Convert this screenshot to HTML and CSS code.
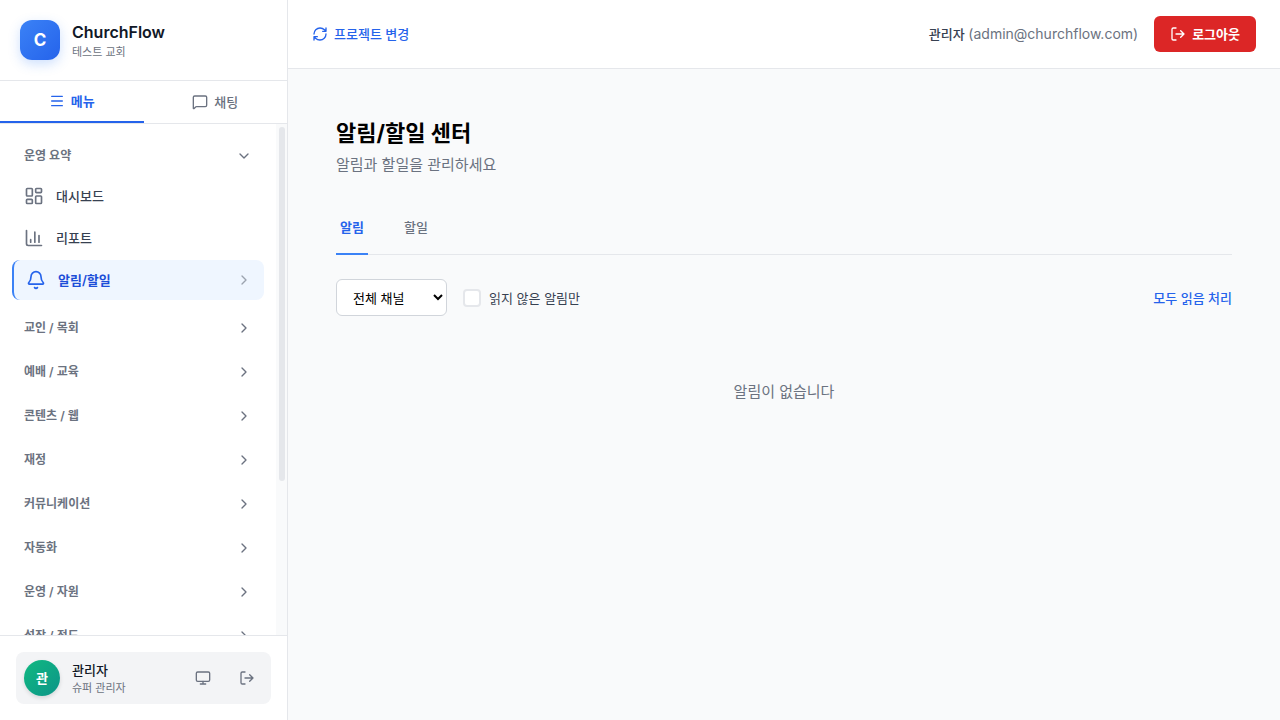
FILE: index.html
```html
<!DOCTYPE html>
<html lang="ko">
<head>
<meta charset="utf-8">
<meta name="viewport" content="width=device-width, initial-scale=1">
<title>ChurchFlow</title>
<link rel="stylesheet" href="styles.css">
</head>
<body>
<svg class="sprite" aria-hidden="true">
  <symbol id="right" viewBox="0 0 24 24"><path d="m9 18 6-6-6-6"/></symbol>
  <symbol id="down" viewBox="0 0 24 24"><path d="m6 9 6 6 6-6"/></symbol>
  <symbol id="menu" viewBox="0 0 24 24"><path d="M4 5h16M4 12h16M4 19h16"/></symbol>
  <symbol id="chat" viewBox="0 0 24 24"><path d="M22 17a2 2 0 0 1-2 2H6.800a2 2 0 0 0-1.400.600l-2.200 2.200A.7.7 0 0 1 2 21.300V5a2 2 0 0 1 2-2h16a2 2 0 0 1 2 2z"/></symbol>
  <symbol id="grid" viewBox="0 0 24 24"><rect x="3" y="3" width="7" height="9" rx="1"/><rect x="14" y="3" width="7" height="5" rx="1"/><rect x="14" y="12" width="7" height="9" rx="1"/><rect x="3" y="16" width="7" height="5" rx="1"/></symbol>
  <symbol id="chart" viewBox="0 0 24 24"><path d="M3 3v16a2 2 0 0 0 2 2h16M18 17V9M13 17V5M8 17v-3"/></symbol>
  <symbol id="bell" viewBox="0 0 24 24"><path d="M10.268 21a2 2 0 0 0 3.464 0M3.262 15.326A1 1 0 0 0 4 17h16a1 1 0 0 0 .740-1.673C19.410 13.956 18 12.499 18 8A6 6 0 0 0 6 8c0 4.499-1.411 5.956-2.738 7.326"/></symbol>
  <symbol id="monitor" viewBox="0 0 24 24"><rect x="2" y="3" width="20" height="14" rx="2"/><path d="M8 21h8M12 17v4"/></symbol>
  <symbol id="logout" viewBox="0 0 24 24"><path d="M9 21H5a2 2 0 0 1-2-2V5a2 2 0 0 1 2-2h4M16 17l5-5-5-5M21 12H9"/></symbol>
  <symbol id="refresh" viewBox="0 0 24 24"><path d="M3 12a9 9 0 0 1 9-9 9.750 9.750 0 0 1 6.740 2.740L21 8M21 3v5h-5M21 12a9 9 0 0 1-9 9 9.750 9.750 0 0 1-6.740-2.740L3 16M8 16H3v5"/></symbol>
</svg>
<div class="app">
  <aside class="sidebar">
    <div class="brand">
      <div class="logo">C</div>
      <div>
        <div class="brand-name">ChurchFlow</div>
        <div class="small">테스트 교회</div>
      </div>
    </div>
    <div class="side-tabs">
      <button class="side-tab side-tab-active"><svg class="icon"><use href="#menu"/></svg>메뉴</button>
      <button class="side-tab"><svg class="icon"><use href="#chat"/></svg>채팅</button>
    </div>
    <div class="nav-area">
      <nav class="nav">
        <div>
          <button class="section" aria-expanded="true">운영 요약<svg class="icon"><use href="#down"/></svg></button>
          <div class="items">
            <a class="item" href="#dashboard"><svg class="icon-lg"><use href="#grid"/></svg>대시보드</a>
            <a class="item" href="#reports"><svg class="icon-lg"><use href="#chart"/></svg>리포트</a>
            <a class="item item-active" href="#alerts"><svg class="icon-lg"><use href="#bell"/></svg><span class="item-text">알림/할일</span><svg class="icon arrow"><use href="#right"/></svg></a>
          </div>
        </div>
        <button class="section">교인 / 목회<svg class="icon"><use href="#right"/></svg></button>
        <button class="section">예배 / 교육<svg class="icon"><use href="#right"/></svg></button>
        <button class="section">콘텐츠 / 웹<svg class="icon"><use href="#right"/></svg></button>
        <button class="section">재정<svg class="icon"><use href="#right"/></svg></button>
        <button class="section">커뮤니케이션<svg class="icon"><use href="#right"/></svg></button>
        <button class="section">자동화<svg class="icon"><use href="#right"/></svg></button>
        <button class="section">운영 / 자원<svg class="icon"><use href="#right"/></svg></button>
        <button class="section">성장 / 전도<svg class="icon"><use href="#right"/></svg></button>
      </nav>
      <div class="rail" aria-hidden="true"><div class="thumb"></div></div>
    </div>
    <div class="side-foot">
      <div class="user-card">
        <div class="avatar">관</div>
        <div class="user-text">
          <div class="user-name">관리자</div>
          <div class="small">슈퍼 관리자</div>
        </div>
        <button class="icon-button" aria-label="화면"><svg class="icon"><use href="#monitor"/></svg></button>
        <button class="icon-button" aria-label="로그아웃"><svg class="icon"><use href="#logout"/></svg></button>
      </div>
    </div>
  </aside>
  <div class="content">
    <header class="topbar">
      <a class="switch" href="#projects"><svg class="icon"><use href="#refresh"/></svg>프로젝트 변경</a>
      <div class="account">
        <div><span class="who-name">관리자</span> <span class="mail">(admin@churchflow.com)</span></div>
        <button class="logout"><svg class="icon"><use href="#logout"/></svg>로그아웃</button>
      </div>
    </header>
    <main class="main">
      <h1 class="title">알림/할일 센터</h1>
      <p class="subtitle">알림과 할일을 관리하세요</p>
      <div class="tabs">
        <button class="tab tab-active">알림</button>
        <button class="tab">할일</button>
      </div>
      <div class="filters">
        <select class="select" aria-label="채널"><option>전체 채널</option></select>
        <label class="check-label" for="unread"><input class="check" type="checkbox" id="unread">읽지 않은 알림만</label>
        <button class="read-all">모두 읽음 처리</button>
      </div>
      <p class="empty">알림이 없습니다</p>
    </main>
  </div>
</div>
</body>
</html>
```

FILE: styles.css
```css
* { box-sizing: border-box; }
body {
  margin: 0;
  font-family: Inter, "Noto Sans CJK KR", sans-serif;
  font-size: 13px;
  line-height: 20px;
  color: #374151;
  background: #f9fafb;
}
button, select, input { font: inherit; color: inherit; }
button { border: 0; padding: 0; background: none; cursor: pointer; }
a { color: inherit; text-decoration: none; }
h1, p { margin: 0; }
svg { fill: none; stroke: currentColor; stroke-width: 2; stroke-linecap: round; stroke-linejoin: round; flex: none; }
.sprite { display: none; }
.icon { width: 16px; height: 16px; }
.icon-lg { width: 20px; height: 20px; color: #6b7280; }

.app { display: flex; height: 100vh; }
.sidebar { display: flex; flex-direction: column; width: 288px; flex: none; background: #fff; border-right: 1px solid #e5e7eb; }
.brand { display: flex; align-items: center; gap: 12px; padding: 20px; border-bottom: 1px solid #e5e7eb; }
.logo {
  display: grid; place-items: center; width: 40px; height: 40px; border-radius: 12px;
  background: linear-gradient(135deg, #3b82f6, #2563eb); color: #fff;
  font-size: 17px; font-weight: 700; box-shadow: 0 4px 12px rgba(59, 130, 246, 0.25);
}
.brand-name { font-size: 16px; line-height: 24px; font-weight: 600; color: #111827; }
.small { font-size: 11px; line-height: 16px; color: #6b7280; }

.side-tabs { display: flex; border-bottom: 1px solid #e5e7eb; }
.side-tab { flex: 1; display: flex; align-items: center; justify-content: center; gap: 6px; height: 42px; font-weight: 500; color: #6b7280; }
.side-tab-active { color: #2563eb; font-weight: 600; border-bottom: 2px solid #2563eb; }

.nav-area { flex: 1; min-height: 0; display: flex; }
.nav { flex: 1; overflow-y: auto; scrollbar-width: none; display: flex; flex-direction: column; gap: 12px; padding: 16px 12px; }
.rail { width: 11px; padding: 3px 2px 3px 3px; background: #f9fafb; }
.thumb { height: 70%; border-radius: 3px; background: #e5e7eb; }
.section { display: flex; align-items: center; justify-content: space-between; width: 100%; height: 32px; flex: none; padding: 0 12px; font-size: 12px; font-weight: 600; color: #6b7280; }
.items { display: flex; flex-direction: column; gap: 2px; margin-top: 4px; }
.item { display: flex; align-items: center; gap: 12px; height: 40px; padding: 0 12px; border-radius: 8px; font-weight: 500; }
.item-active { background: #eff6ff; color: #1d4ed8; font-weight: 600; border-left: 2px solid #3b82f6; }
.item-active .icon-lg { color: #2563eb; }
.item-text { flex: 1; }
.arrow { color: #9ca3af; }

.side-foot { padding: 16px; border-top: 1px solid #e5e7eb; }
.user-card { display: flex; align-items: center; gap: 12px; padding: 8px; border-radius: 8px; background: #f3f4f6; }
.avatar {
  display: grid; place-items: center; width: 36px; height: 36px; border-radius: 50%;
  background: linear-gradient(135deg, #10b981, #0d9488); color: #fff; font-weight: 600;
  box-shadow: 0 2px 4px rgba(0, 0, 0, 0.12);
}
.user-text { flex: 1; }
.user-name { font-weight: 500; color: #111827; }
.icon-button { display: grid; place-items: center; width: 32px; height: 32px; color: #6b7280; }

.content { flex: 1; min-width: 0; display: flex; flex-direction: column; }
.topbar { display: flex; align-items: center; justify-content: space-between; padding: 16px 24px; background: #fff; border-bottom: 1px solid #e5e7eb; }
.switch { display: flex; align-items: center; gap: 6px; font-weight: 500; color: #2563eb; }
.account { display: flex; align-items: center; gap: 16px; }
.who-name { font-weight: 500; }
.mail { font-size: 14px; color: #6b7280; }
.logout { display: flex; align-items: center; gap: 6px; height: 36px; padding: 0 16px; border-radius: 6px; background: #dc2626; color: #fff; font-weight: 600; }

.main { flex: 1; padding: 48px; }
.title { font-size: 22px; line-height: 32px; font-weight: 700; color: #000; }
.subtitle { margin-top: 4px; font-size: 15px; line-height: 24px; color: #6b7280; }
.tabs { display: flex; gap: 32px; margin-top: 24px; border-bottom: 1px solid #e5e7eb; }
.tab { height: 54px; margin-bottom: -1px; padding: 0 4px; font-weight: 500; color: #6b7280; border-bottom: 2px solid transparent; }
.tab-active { color: #2563eb; font-weight: 600; border-color: #3b82f6; }
.filters { display: flex; align-items: center; gap: 16px; margin-top: 24px; }
.select { width: 111px; height: 37px; padding: 0 0 0 12px; border: 1px solid #d1d5db; border-radius: 6px; background: #fff; color: #000; }
.check-label { display: flex; align-items: center; gap: 8px; }
.check { appearance: none; width: 18px; height: 18px; margin: 0; border: 2px solid #e5e7eb; border-radius: 4px; background: #fff; }
.check:checked { background: #2563eb; border-color: #2563eb; }
.read-all { margin-left: auto; color: #2563eb; font-weight: 500; }
.empty { margin-top: 64px; text-align: center; font-size: 15px; line-height: 24px; color: #6b7280; }
```
